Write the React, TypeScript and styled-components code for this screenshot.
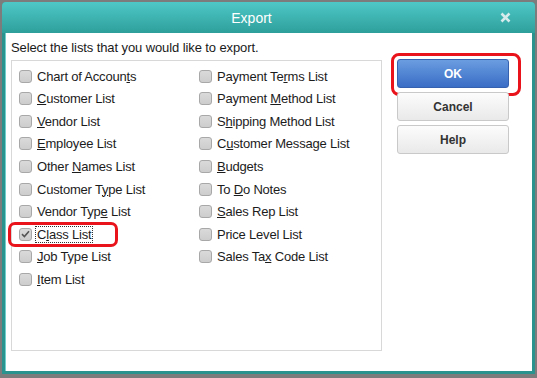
import { FC } from 'react'
import styled, { createGlobalStyle, css } from 'styled-components'

const GlobalStyle = createGlobalStyle`
  html, body {
    margin: 0;
    padding: 0;
    width: 537px;
    height: 378px;
    overflow: hidden;
    background: #7c7c7c;
    font-family: 'Liberation Sans', Arial, sans-serif;
  }
`

const Window = styled.div`
  margin: 2px;
  width: 533px;
  height: 372px;
  display: flex;
  flex-direction: column;
  background: #2a938e;
  border-radius: 4px 4px 0 0;
  box-sizing: border-box;
  overflow: hidden;
`

const TitleBar = styled.div`
  height: 31px;
  flex: none;
  display: flex;
  align-items: center;
  justify-content: center;
  padding-right: 34px;
  position: relative;
  color: #ffffff;
  font-size: 14px;
  background: linear-gradient(#4ec8c7, #2e9f9b);
`

const CloseButton = styled.div`
  position: absolute;
  right: 24px;
  top: 10px;
  width: 11px;
  height: 11px;
  display: flex;
`

const Client = styled.div`
  flex: 1;
  margin: 0 3px 3px 3px;
  border-left: 1px solid #6fd0cc;
  background: #ffffff;
  display: flex;
  padding: 7px 6px 0 5px;
  box-sizing: border-box;
`

const LeftPane = styled.div`
  display: flex;
  flex-direction: column;
`

const Prompt = styled.div`
  font-size: 13px;
  line-height: 15px;
  color: #1a1a1a;
  margin-bottom: 5px;
  letter-spacing: -0.1px;
`

const ListBox = styled.div`
  width: 371px;
  height: 291px;
  box-sizing: border-box;
  border: 1px solid #d8d8d8;
  padding: 4px 7px;
  display: grid;
  grid-template-columns: 180px 1fr;
  grid-template-rows: repeat(10, 22.55px);
  grid-auto-flow: column;
`

const Item = styled.div<{ $highlight?: boolean }>`
  position: relative;
  display: flex;
  align-items: center;
  gap: 4px;
  font-size: 13px;
  letter-spacing: -0.2px;
  color: #1c1c1c;
  ${(p) =>
    p.$highlight &&
    css`
      &::after {
        content: '';
        position: absolute;
        left: -11px;
        top: -1px;
        width: 110px;
        height: 25px;
        box-sizing: border-box;
        border: 3px solid #e8131b;
        border-radius: 7px;
      }
    `}
`

const Box = styled.div`
  width: 13px;
  height: 13px;
  box-sizing: border-box;
  border: 1px solid #a8a8a8;
  border-radius: 3px;
  background: linear-gradient(#dadada, #cdcdcd);
  display: flex;
  align-items: center;
  justify-content: center;
  flex: none;
`

const Label = styled.span<{ $focused?: boolean }>`
  padding: 0 1px;
  line-height: 15px;
  ${(p) => p.$focused && 'outline: 1px dotted #333; outline-offset: 0;'}
`

const ButtonColumn = styled.div`
  margin-left: 15px;
  padding-top: 19px;
  display: flex;
  flex-direction: column;
  gap: 4px;
`

const Button = styled.div<{ $primary?: boolean; $highlight?: boolean }>`
  position: relative;
  width: 112px;
  height: 29px;
  box-sizing: border-box;
  border-radius: 3px;
  display: flex;
  align-items: center;
  justify-content: center;
  font-size: 12px;
  font-weight: bold;
  color: #333333;
  border: 1px solid #c9c9c9;
  background: linear-gradient(#fcfcfc, #e9e9e9);
  ${(p) =>
    p.$primary &&
    css`
      color: #ffffff;
      border-color: #3561ae;
      background: linear-gradient(#6a9de0, #3a6dc5);
    `}
  ${(p) =>
    p.$highlight &&
    css`
      &::after {
        content: '';
        position: absolute;
        left: -7px;
        top: -7px;
        right: -13px;
        bottom: -9px;
        border: 3px solid #e8131b;
        border-radius: 8px;
      }
    `}
`

interface ListEntry {
  text: string
  key?: number
  checked?: boolean
}

const entries: ListEntry[] = [
  { text: 'Chart of Accounts', key: 15 },
  { text: 'Customer List', key: 0 },
  { text: 'Vendor List', key: 0 },
  { text: 'Employee List', key: 0 },
  { text: 'Other Names List', key: 6 },
  { text: 'Customer Type List', key: 10 },
  { text: 'Vendor Type List', key: 10 },
  { text: 'Class List', key: 1, checked: true },
  { text: 'Job Type List', key: 0 },
  { text: 'Item List', key: 0 },
  { text: 'Payment Terms List', key: 10 },
  { text: 'Payment Method List', key: 8 },
  { text: 'Shipping Method List', key: 1 },
  { text: 'Customer Message List', key: 1 },
  { text: 'Budgets', key: 0 },
  { text: 'To Do Notes', key: 3 },
  { text: 'Sales Rep List', key: 0 },
  { text: 'Price Level List' },
  { text: 'Sales Tax Code List', key: 8 },
]

const Mnemonic: FC<{ text: string; index?: number }> = ({ text, index }) => {
  if (index === undefined) return <>{text}</>
  return (
    <>
      {text.slice(0, index)}
      <u>{text[index]}</u>
      {text.slice(index + 1)}
    </>
  )
}

const Check = () => (
  <svg width="9" height="8" viewBox="0 0 9 8">
    <path d="M1 4.2 L3.4 6.5 L8 1.2" fill="none" stroke="#555" strokeWidth="1.6" />
  </svg>
)

const App: FC = () => {
  return (
    <>
      <GlobalStyle />
      <Window>
        <TitleBar>
          Export
          <CloseButton>
            <svg width="11" height="11" viewBox="0 0 11 11">
              <path d="M1.5 1.5 L9.5 9.5 M9.5 1.5 L1.5 9.5" stroke="#d6ecec" strokeWidth="2.6" />
            </svg>
          </CloseButton>
        </TitleBar>
        <Client>
          <LeftPane>
            <Prompt>Select the lists that you would like to export.</Prompt>
            <ListBox>
              {entries.map((e) => (
                <Item key={e.text} $highlight={e.checked}>
                  <Box>{e.checked && <Check />}</Box>
                  <Label $focused={e.checked}>
                    <Mnemonic text={e.text} index={e.key} />
                  </Label>
                </Item>
              ))}
            </ListBox>
          </LeftPane>
          <ButtonColumn>
            <Button $primary $highlight>
              OK
            </Button>
            <Button>Cancel</Button>
            <Button>Help</Button>
          </ButtonColumn>
        </Client>
      </Window>
    </>
  )
}

export default App
